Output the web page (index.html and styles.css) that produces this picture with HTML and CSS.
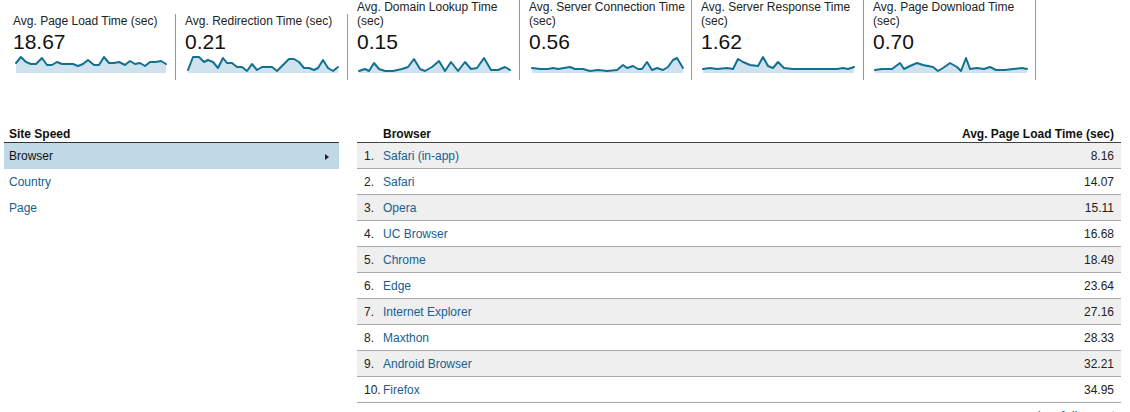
FILE: index.html
```html
<!DOCTYPE html>
<html>
<head>
<meta charset="utf-8">
<link rel="stylesheet" href="styles.css">
</head>
<body>
<div class="metrics">
  <div class="metric">
    <div class="m-title">Avg. Page Load Time (sec)</div>
    <div class="m-value">18.67</div>
    <svg class="spark" viewBox="13 56 154 20" width="154" height="20">
      <polygon class="area" points="16,63 21,57 26,62 31,64 36,64 42,58 47,65 52,65 57,62 62,64 68,64 73,64 78,66 83,64 88,60 94,65 99,65 104,57 109,63 114,63 119,62 125,65 130,61 135,64 140,63 145,66 150,62 156,62 161,61 166,64 166,73 16,73"/>
      <polyline class="line" points="16,63 21,57 26,62 31,64 36,64 42,58 47,65 52,65 57,62 62,64 68,64 73,64 78,66 83,64 88,60 94,65 99,65 104,57 109,63 114,63 119,62 125,65 130,61 135,64 140,63 145,66 150,62 156,62 161,61 166,64"/>
    </svg>
  </div>
  <div class="metric">
    <div class="m-title">Avg. Redirection Time (sec)</div>
    <div class="m-value">0.21</div>
    <svg class="spark" viewBox="185 56 154 20" width="154" height="20">
      <polygon class="area" points="188,70 193,57 199,57 204,62 208,60 213,62 218,68 223,58 227,63 232,63 237,67 242,67 247,71 252,64 257,70 262,67 267,67 272,67 277,71 283,65 289,59 294,59 299,62 304,68 309,68 314,70 318,68 323,60 328,68 333,71 338,67 338,73 188,73"/>
      <polyline class="line" points="188,70 193,57 199,57 204,62 208,60 213,62 218,68 223,58 227,63 232,63 237,67 242,67 247,71 252,64 257,70 262,67 267,67 272,67 277,71 283,65 289,59 294,59 299,62 304,68 309,68 314,70 318,68 323,60 328,68 333,71 338,67"/>
    </svg>
  </div>
  <div class="metric">
    <div class="m-title">Avg. Domain Lookup Time (sec)</div>
    <div class="m-value">0.15</div>
    <svg class="spark" viewBox="357 56 154 20" width="154" height="20">
      <polygon class="area" points="359,71 365,69 369,71 374,63 379,69 385,71 393,71 402,69 408,67 414,59 420,69 425,71 432,67 439,61 445,71 451,62 458,71 465,62 471,69 477,68 484,58 491,70 498,70 505,67 510,70 510,73 359,73"/>
      <polyline class="line" points="359,71 365,69 369,71 374,63 379,69 385,71 393,71 402,69 408,67 414,59 420,69 425,71 432,67 439,61 445,71 451,62 458,71 465,62 471,69 477,68 484,58 491,70 498,70 505,67 510,70"/>
    </svg>
  </div>
  <div class="metric">
    <div class="m-title">Avg. Server Connection Time (sec)</div>
    <div class="m-value">0.56</div>
    <svg class="spark" viewBox="529 56 154 20" width="154" height="20">
      <polygon class="area" points="532,68 540,69 548,69 553,68 558,69 570,67 575,69 583,69 590,71 598,70 607,71 617,70 623,65 627,68 633,66 638,69 642,69 647,62 652,70 657,68 663,70 668,67 673,60 677,58 683,68 683,73 532,73"/>
      <polyline class="line" points="532,68 540,69 548,69 553,68 558,69 570,67 575,69 583,69 590,71 598,70 607,71 617,70 623,65 627,68 633,66 638,69 642,69 647,62 652,70 657,68 663,70 668,67 673,60 677,58 683,68"/>
    </svg>
  </div>
  <div class="metric">
    <div class="m-title">Avg. Server Response Time (sec)</div>
    <div class="m-value">1.62</div>
    <svg class="spark" viewBox="701 56 154 20" width="154" height="20">
      <polygon class="area" points="703,69 710,68 717,69 727,68 733,69 738,59 743,62 750,65 758,66 763,57 768,66 773,68 778,62 784,68 793,69 807,69 817,69 827,69 837,69 843,68 848,69 854,67 854,73 703,73"/>
      <polyline class="line" points="703,69 710,68 717,69 727,68 733,69 738,59 743,62 750,65 758,66 763,57 768,66 773,68 778,62 784,68 793,69 807,69 817,69 827,69 837,69 843,68 848,69 854,67"/>
    </svg>
  </div>
  <div class="metric">
    <div class="m-title">Avg. Page Download Time (sec)</div>
    <div class="m-value">0.70</div>
    <svg class="spark" viewBox="873 56 154 20" width="154" height="20">
      <polygon class="area" points="875,70 882,69 892,69 900,63 904,69 910,66 917,63 923,65 928,66 933,67 938,71 943,68 950,63 957,67 961,71 966,58 970,69 977,68 984,69 990,67 996,70 1005,70 1013,69 1022,68 1027,69 1027,73 875,73"/>
      <polyline class="line" points="875,70 882,69 892,69 900,63 904,69 910,66 917,63 923,65 928,66 933,67 938,71 943,68 950,63 957,67 961,71 966,58 970,69 977,68 984,69 990,67 996,70 1005,70 1013,69 1022,68 1027,69"/>
    </svg>
  </div>
</div>

<div class="content">
  <div class="side">
    <div class="side-head">Site Speed</div>
    <div class="side-item selected">Browser<span class="arrow"></span></div>
    <div class="side-item"><a href="#">Country</a></div>
    <div class="side-item"><a href="#">Page</a></div>
  </div>
  <div class="report">
    <div class="t-head">
      <span class="c-num"></span>
      <span class="c-name">Browser</span>
      <span class="c-val">Avg. Page Load Time (sec)</span>
    </div>
    <div class="t-row odd"><span class="c-num">1.</span><a class="c-name" href="#">Safari (in-app)</a><span class="c-val">8.16</span></div>
    <div class="t-row"><span class="c-num">2.</span><a class="c-name" href="#">Safari</a><span class="c-val">14.07</span></div>
    <div class="t-row odd"><span class="c-num">3.</span><a class="c-name" href="#">Opera</a><span class="c-val">15.11</span></div>
    <div class="t-row"><span class="c-num">4.</span><a class="c-name" href="#">UC Browser</a><span class="c-val">16.68</span></div>
    <div class="t-row odd"><span class="c-num">5.</span><a class="c-name" href="#">Chrome</a><span class="c-val">18.49</span></div>
    <div class="t-row"><span class="c-num">6.</span><a class="c-name" href="#">Edge</a><span class="c-val">23.64</span></div>
    <div class="t-row odd"><span class="c-num">7.</span><a class="c-name" href="#">Internet Explorer</a><span class="c-val">27.16</span></div>
    <div class="t-row"><span class="c-num">8.</span><a class="c-name" href="#">Maxthon</a><span class="c-val">28.33</span></div>
    <div class="t-row odd"><span class="c-num">9.</span><a class="c-name" href="#">Android Browser</a><span class="c-val">32.21</span></div>
    <div class="t-row"><span class="c-num">10.</span><a class="c-name" href="#">Firefox</a><span class="c-val">34.95</span></div>
    <div class="t-foot"><a href="#">view full report</a></div>
  </div>
</div>
</body>
</html>
```
FILE: styles.css
```css
* { box-sizing: border-box; }
html, body {
  margin: 0;
  padding: 0;
  background: #fff;
  overflow: hidden;
}
body {
  font-family: "Liberation Sans", Arial, sans-serif;
  font-size: 12px;
  color: #222;
  width: 1130px;
  height: 412px;
}
a { text-decoration: none; color: #17608f; }

.metrics {
  display: flex;
  align-items: flex-end;
  height: 80px;
  padding-left: 4px;
}
.metric {
  width: 172px;
  padding: 0 10px 0 9px;
  border-right: 1px solid #9a9a9a;
  display: flex;
  flex-direction: column;
}
.m-title {
  font-size: 12px;
  line-height: 14px;
  color: #222;
  margin-bottom: 2px;
  margin-right: -8px;
}
.m-value {
  font-size: 21px;
  line-height: 24px;
  color: #111;
}
.spark {
  display: block;
  margin-top: 2px;
  margin-bottom: 4px;
  overflow: visible;
}
.spark .area { fill: #cfe3ee; stroke: none; }
.spark .line {
  fill: none;
  stroke: #137091;
  stroke-width: 2;
  stroke-linejoin: round;
  stroke-linecap: round;
}

.content {
  display: flex;
  margin-top: 44px;
  padding-left: 4px;
}
.side {
  width: 335px;
  margin-right: 18px;
}
.side-head {
  height: 19px;
  line-height: 20px;
  font-weight: bold;
  padding-left: 5px;
  border-bottom: 1px solid #333;
  color: #111;
}
.side-item {
  height: 26px;
  padding-top: 1px;
  line-height: 25px;
  padding-left: 5px;
  display: flex;
  align-items: center;
}
.side-item.selected {
  background: #c1d9e6;
  color: #111;
  justify-content: space-between;
  padding-right: 10px;
}
.arrow {
  width: 0;
  height: 0;
  border-top: 3px solid transparent;
  border-bottom: 3px solid transparent;
  border-left: 4px solid #222;
}

.report {
  width: 764px;
}
.t-head {
  height: 19px;
  line-height: 20px;
  font-weight: bold;
  color: #111;
  border-bottom: 1px solid #444;
  display: flex;
  padding: 0 7px;
}
.t-row {
  height: 26px;
  padding-top: 1px;
  line-height: 24px;
  border-bottom: 1px solid #a8a8a8;
  display: flex;
  padding-left: 7px;
  padding-right: 7px;
}
.t-row.odd { background: #efefef; }
.c-num { width: 19px; flex: none; }
.c-name { flex: 1; }
.c-val { text-align: right; }
.t-foot {
  text-align: right;
  padding-right: 6px;
  padding-top: 6px;
  font-size: 13px;
  line-height: 14px;
}
```
